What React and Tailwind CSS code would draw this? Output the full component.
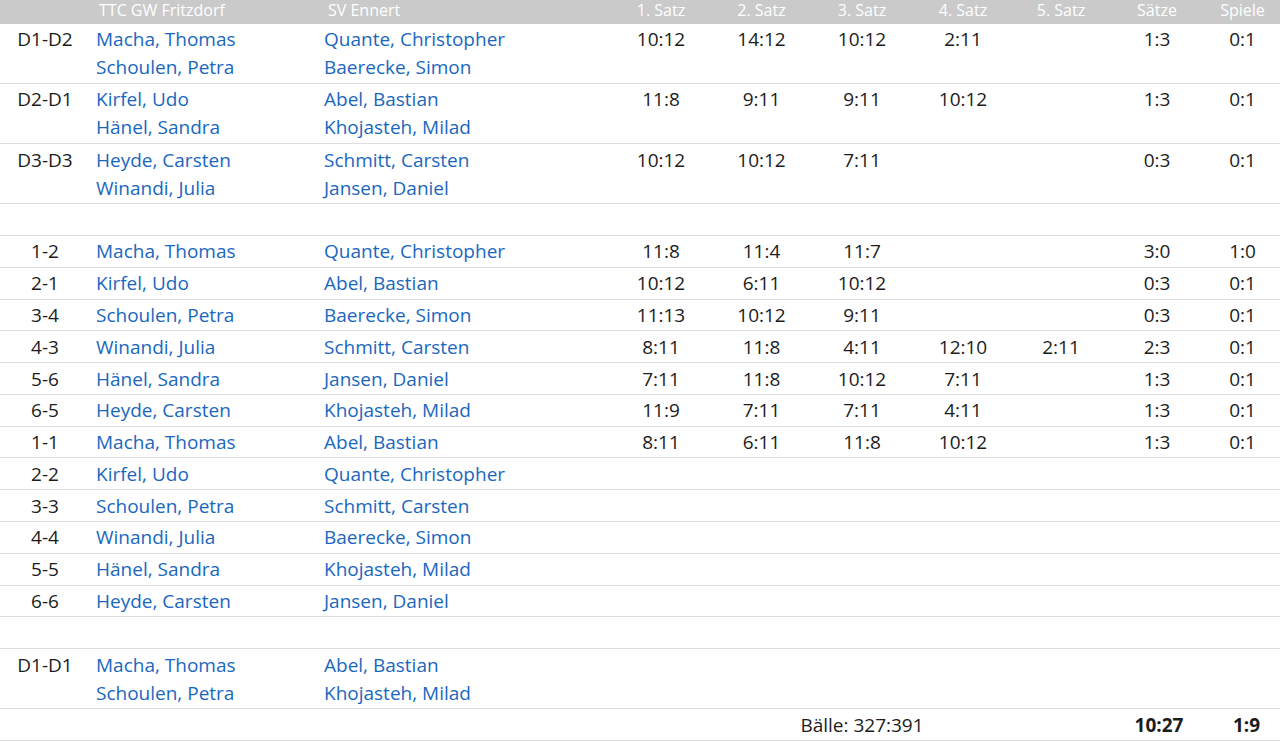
import React from 'react';

const DOUBLES_TOP = [
  { pos: 'D1-D2', home: ['Macha, Thomas', 'Schoulen, Petra'], guest: ['Quante, Christopher', 'Baerecke, Simon'], sets: ['10:12', '14:12', '10:12', '2:11', ''], saetze: '1:3', spiele: '0:1' },
  { pos: 'D2-D1', home: ['Kirfel, Udo', 'Hänel, Sandra'], guest: ['Abel, Bastian', 'Khojasteh, Milad'], sets: ['11:8', '9:11', '9:11', '10:12', ''], saetze: '1:3', spiele: '0:1' },
  { pos: 'D3-D3', home: ['Heyde, Carsten', 'Winandi, Julia'], guest: ['Schmitt, Carsten', 'Jansen, Daniel'], sets: ['10:12', '10:12', '7:11', '', ''], saetze: '0:3', spiele: '0:1' },
];

const SINGLES = [
  { pos: '1-2', home: 'Macha, Thomas', guest: 'Quante, Christopher', sets: ['11:8', '11:4', '11:7', '', ''], saetze: '3:0', spiele: '1:0' },
  { pos: '2-1', home: 'Kirfel, Udo', guest: 'Abel, Bastian', sets: ['10:12', '6:11', '10:12', '', ''], saetze: '0:3', spiele: '0:1' },
  { pos: '3-4', home: 'Schoulen, Petra', guest: 'Baerecke, Simon', sets: ['11:13', '10:12', '9:11', '', ''], saetze: '0:3', spiele: '0:1' },
  { pos: '4-3', home: 'Winandi, Julia', guest: 'Schmitt, Carsten', sets: ['8:11', '11:8', '4:11', '12:10', '2:11'], saetze: '2:3', spiele: '0:1' },
  { pos: '5-6', home: 'Hänel, Sandra', guest: 'Jansen, Daniel', sets: ['7:11', '11:8', '10:12', '7:11', ''], saetze: '1:3', spiele: '0:1' },
  { pos: '6-5', home: 'Heyde, Carsten', guest: 'Khojasteh, Milad', sets: ['11:9', '7:11', '7:11', '4:11', ''], saetze: '1:3', spiele: '0:1' },
  { pos: '1-1', home: 'Macha, Thomas', guest: 'Abel, Bastian', sets: ['8:11', '6:11', '11:8', '10:12', ''], saetze: '1:3', spiele: '0:1' },
  { pos: '2-2', home: 'Kirfel, Udo', guest: 'Quante, Christopher', sets: ['', '', '', '', ''], saetze: '', spiele: '' },
  { pos: '3-3', home: 'Schoulen, Petra', guest: 'Schmitt, Carsten', sets: ['', '', '', '', ''], saetze: '', spiele: '' },
  { pos: '4-4', home: 'Winandi, Julia', guest: 'Baerecke, Simon', sets: ['', '', '', '', ''], saetze: '', spiele: '' },
  { pos: '5-5', home: 'Hänel, Sandra', guest: 'Khojasteh, Milad', sets: ['', '', '', '', ''], saetze: '', spiele: '' },
  { pos: '6-6', home: 'Heyde, Carsten', guest: 'Jansen, Daniel', sets: ['', '', '', '', ''], saetze: '', spiele: '' },
];

const DOUBLES_BOTTOM = [
  { pos: 'D1-D1', home: ['Macha, Thomas', 'Schoulen, Petra'], guest: ['Abel, Bastian', 'Khojasteh, Milad'], sets: ['', '', '', '', ''], saetze: '', spiele: '' },
];

const td = 'pt-[1.4px] leading-[28px] align-top';
const row = 'border-b border-[#dddddd]';

function Names({ names }) {
  return (
    <div className="flex flex-col">
      {names.map((n) => (
        <span key={n}>{n}</span>
      ))}
    </div>
  );
}

function MatchRow({ m, double }) {
  // double rows sit a touch taller than two single lines
  const cell = `${td} ${double ? 'pb-[1.7px]' : 'pb-[1.4px]'}`;
  return (
    <tr className={row}>
      <td className={`${cell} text-center`}>{m.pos}</td>
      <td className={`${cell} pl-[6px] text-[#1a67bf]`}>{double ? <Names names={m.home} /> : m.home}</td>
      <td className={`${cell} pl-[4px] text-[#1a67bf]`}>{double ? <Names names={m.guest} /> : m.guest}</td>
      {m.sets.map((s, i) => (
        <td key={i} className={`${cell} text-center`}>{s}</td>
      ))}
      <td className={`${cell} text-center`}>{m.saetze}</td>
      <td className={`${cell} text-center`}>{m.spiele}</td>
    </tr>
  );
}

function EmptyRow() {
  return (
    <tr className={row}>
      <td className={`${td} pb-[1.4px]`} colSpan={10}>&nbsp;</td>
    </tr>
  );
}

export default function App() {
  return (
    <div className="w-[1280px] h-[741px] overflow-hidden bg-white text-[#1c1c1c] font-['Open_Sans',sans-serif] text-[19px]">
      <table className="w-full border-collapse table-fixed">
        <colgroup>
          <col className="w-[90px]" />
          <col className="w-[230px]" />
          <col className="w-[290px]" />
          <col className="w-[102px]" />
          <col className="w-[99px]" />
          <col className="w-[102px]" />
          <col className="w-[100px]" />
          <col className="w-[96px]" />
          <col className="w-[96px]" />
          <col className="w-[75px]" />
        </colgroup>
        <thead>
          <tr className="bg-[#cacaca] text-white text-[16px] h-[24px] leading-[20px]">
            <th className="font-normal pb-[4px]"></th>
            <th className="font-normal pb-[4px] text-left pl-[9px]">TTC GW Fritzdorf</th>
            <th className="font-normal pb-[4px] text-left pl-[8px]">SV Ennert</th>
            <th className="font-normal pb-[4px]">1. Satz</th>
            <th className="font-normal pb-[4px]">2. Satz</th>
            <th className="font-normal pb-[4px]">3. Satz</th>
            <th className="font-normal pb-[4px]">4. Satz</th>
            <th className="font-normal pb-[4px]">5. Satz</th>
            <th className="font-normal pb-[4px]">Sätze</th>
            <th className="font-normal pb-[4px]">Spiele</th>
          </tr>
        </thead>
        <tbody>
          {DOUBLES_TOP.map((m) => (
            <MatchRow key={m.pos} m={m} double />
          ))}
          <EmptyRow />
          {SINGLES.map((m) => (
            <MatchRow key={m.pos} m={m} />
          ))}
          <EmptyRow />
          {DOUBLES_BOTTOM.map((m) => (
            <MatchRow key={m.pos} m={m} double />
          ))}
          <tr className={row}>
            <td className={td}></td>
            <td className={td}></td>
            <td className={td}></td>
            <td className={td}></td>
            <td className={td}></td>
            <td className={`${td} pb-[1.4px] text-center`}>
              <div className="flex justify-center">
                <span className="whitespace-nowrap">Bälle: 327:391</span>
              </div>
            </td>
            <td className={td}></td>
            <td className={td}></td>
            <td className={`${td} pb-[1.4px] text-center font-bold pl-[4px]`}>10:27</td>
            <td className={`${td} pb-[1.4px] text-center font-bold pl-[8px]`}>1:9</td>
          </tr>
        </tbody>
      </table>
    </div>
  );
}
